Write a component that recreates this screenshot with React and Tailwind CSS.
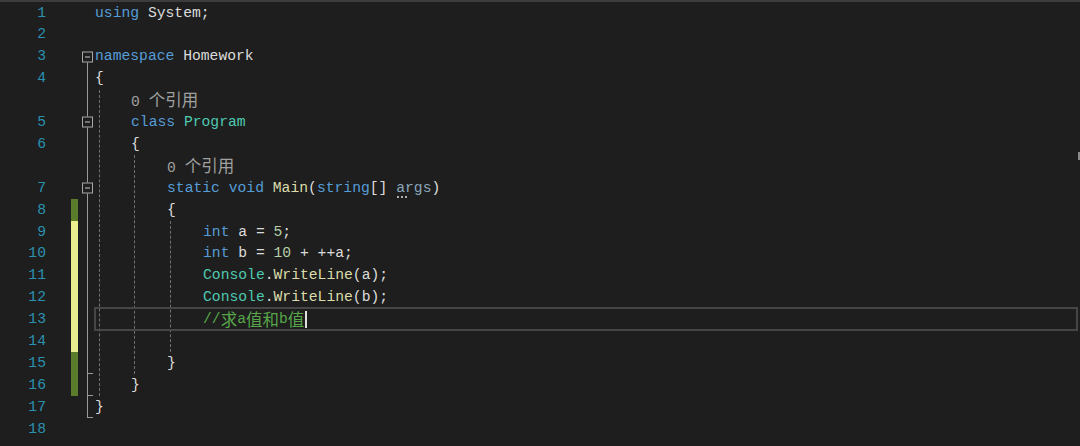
import React from "react";

const KW = "text-[#569cd6]";
const TY = "text-[#4ec9b0]";
const FN = "text-[#dcdcaa]";
const TX = "text-[#dcdcdc]";
const NU = "text-[#b5cea8]";
const CM = "text-[#57a64a]";

const CJK = ({ children, cls = "" }) => (
  <span className={"text-[16.5px] " + cls} style={{ fontFamily: '"Noto Sans CJK SC", sans-serif' }}>
    {children}
  </span>
);

const rows = [
  { n: 1, ind: 0, code: <><span className={KW}>using</span><span className={TX}> System;</span></> },
  { n: 2 },
  { n: 3, box: true, lineFrom: "mid", code: <><span className={KW}>namespace</span><span className={TX}> Homework</span></> },
  { n: 4, line: true, code: <span className={TX}>{"{"}</span>, ind: 0 },
  { lens: true, line: true, ind: 1 },
  { n: 5, line: true, box: true, ind: 1, code: <><span className={KW}>class</span><span className={TY}> Program</span></> },
  { n: 6, line: true, ind: 1, code: <span className={TX}>{"{"}</span> },
  { lens: true, line: true, ind: 2 },
  {
    n: 7, line: true, box: true, ind: 2,
    code: (
      <>
        <span className={KW}>static void </span>
        <span className={FN}>Main</span>
        <span className={TX}>(</span>
        <span className={KW}>string</span>
        <span className={TX}>[] </span>
        <span className="relative text-[#8aa6ba]">
          args
          <span className="absolute left-[1px] bottom-[-3px] flex gap-[2px]">
            <span className="w-[2px] h-[2px] bg-[#b0b0b0]" />
            <span className="w-[2px] h-[2px] bg-[#b0b0b0]" />
            <span className="w-[2px] h-[2px] bg-[#b0b0b0]" />
          </span>
        </span>
        <span className={TX}>)</span>
      </>
    ),
  },
  { n: 8, line: true, ind: 2, chg: "g", code: <span className={TX}>{"{"}</span> },
  { n: 9, line: true, ind: 3, chg: "y", code: <><span className={KW}>int</span><span className={TX}> a = </span><span className={NU}>5</span><span className={TX}>;</span></> },
  { n: 10, line: true, ind: 3, chg: "y", code: <><span className={KW}>int</span><span className={TX}> b = </span><span className={NU}>10</span><span className={TX}> + ++a;</span></> },
  { n: 11, line: true, ind: 3, chg: "y", code: <><span className={TY}>Console</span><span className={TX}>.</span><span className={FN}>WriteLine</span><span className={TX}>(a);</span></> },
  { n: 12, line: true, ind: 3, chg: "y", code: <><span className={TY}>Console</span><span className={TX}>.</span><span className={FN}>WriteLine</span><span className={TX}>(b);</span></> },
  {
    n: 13, line: true, ind: 3, chg: "y", cur: true,
    code: (
      <>
        <span className={CM}>//</span>
        <CJK cls={CM}>求</CJK>
        <span className={CM}>a</span>
        <CJK cls={CM}>值和</CJK>
        <span className={CM}>b</span>
        <CJK cls={CM}>值</CJK>
        <span className="inline-block w-[1.5px] h-[17px] bg-[#e0e0e0] align-middle ml-[1px]" />
      </>
    ),
  },
  { n: 14, line: true, chg: "y" },
  { n: 15, line: true, tick: true, ind: 2, chg: "g", code: <span className={TX}>{"}"}</span> },
  { n: 16, line: true, tick: true, ind: 1, chg: "g", code: <span className={TX}>{"}"}</span> },
  { n: 17, line: true, tick: true, ind: 0, code: <span className={TX}>{"}"}</span> },
  { n: 18 },
];

const indCls = ["pl-0", "pl-[36px]", "pl-[72px]", "pl-[108px]"];

function Row({ r }) {
  const chg =
    r.chg === "g" ? "bg-[#5b7d2b]" : r.chg === "y" ? "bg-[#e9ee8e]" : "bg-transparent";
  return (
    <div className="flex h-[21.9px] items-center">
      <div className="w-[46px] text-right text-[#2b91af]">{r.n || ""}</div>
      <div className="w-[25px]" />
      <div className={"w-[7px] h-full " + chg} />
      <div className="relative w-[17px] h-full">
        {r.line && <div className="absolute left-[9px] top-0 bottom-0 w-px bg-[#9a9a9a]" />}
        {r.lineFrom === "mid" && <div className="absolute left-[9px] top-1/2 bottom-0 w-px bg-[#9a9a9a]" />}
        {r.tick && <div className="absolute left-[9px] bottom-0 w-[6px] h-px bg-[#9a9a9a]" />}
        {r.box && (
          <div className="absolute left-[4px] top-1/2 -translate-y-1/2 w-[11px] h-[11px] border border-[#a8a8a8] bg-[#1e1e1e] flex items-center justify-center">
            <div className="w-[5px] h-px bg-[#c8c8c8]" />
          </div>
        )}
      </div>
      <div className={"relative flex-1 h-full flex items-center whitespace-pre " + (indCls[r.ind || 0])}>
        {r.cur && <div className="absolute top-[-1px] bottom-[-1px] left-[-1px] right-[2px] border-2 border-[#464646]" />}
        {r.lens ? (
          <span className="text-[#a0a0a0]">
            0 <CJK cls="text-[#a0a0a0]">个引用</CJK>
          </span>
        ) : (
          r.code || null
        )}
      </div>
    </div>
  );
}

export default function App() {
  return (
    <div
      className="w-[1080px] h-[446px] bg-[#1e1e1e] overflow-hidden text-[14.7px] leading-none"
      style={{ fontFamily: '"Liberation Mono", "Noto Sans CJK SC", monospace' }}
    >
      <div className="h-[2px] bg-[#3c3c3c]" />
      <div className="relative">
        <div className="absolute left-[99px] top-[87.6px] h-[306.6px] border-l border-dashed border-[#707070]" />
        <div className="absolute left-[134px] top-[153.3px] h-[219px] border-l border-dashed border-[#707070]" />
        <div className="absolute left-[170px] top-[219px] h-[131.4px] border-l border-dashed border-[#707070]" />
        <div className="absolute right-0 top-[150px] w-[2px] h-[8px] bg-[#8a8a8a]" />
        {rows.map((r, i) => (
          <Row key={i} r={r} />
        ))}
      </div>
    </div>
  );
}
